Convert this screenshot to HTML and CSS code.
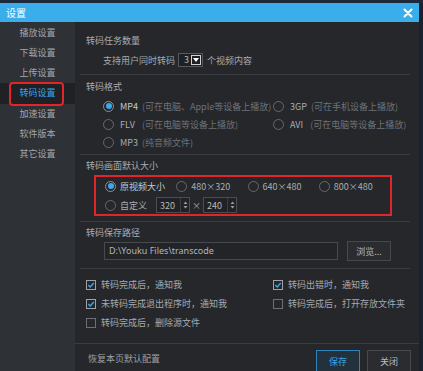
FILE: index.html
```html
<!DOCTYPE html>
<html lang="zh-CN">
<head>
<meta charset="utf-8">
<title>设置</title>
<link rel="stylesheet" href="styles.css">
</head>
<body>
<div class="desk"></div>
<div class="window">
  <div class="titlebar">
    <span class="title">设置</span>
    <svg class="close" width="10" height="10" viewBox="0 0 10 10"><path d="M1.5 1.5 L8.5 8.5 M8.5 1.5 L1.5 8.5" stroke="#fff" stroke-width="2" stroke-linecap="round"/></svg>
  </div>
  <div class="frame">
    <nav class="side">
      <div class="nav-item">播放设置</div>
      <div class="nav-item">下载设置</div>
      <div class="nav-item">上传设置</div>
      <div class="nav-item active">转码设置</div>
      <div class="nav-item">加速设置</div>
      <div class="nav-item">软件版本</div>
      <div class="nav-item">其它设置</div>
    </nav>
    <div class="main">
      <div class="content">
        <div class="heading h1">转码任务数量</div>
        <div class="count-row">
          <span>支持用户同时转码</span>
          <span class="select"><span class="sel-val">3</span><span class="sel-btn"><svg width="6" height="4" viewBox="0 0 6 4"><path d="M0 0 H6 L3 4 Z" fill="#fff"/></svg></span></span>
          <span class="after-sel">个视频内容</span>
        </div>
        <div class="sep s1"></div>
        <div class="heading h2">转码格式</div>
        <div class="formats">
          <div class="opt"><span class="radio on"></span><span class="lbl bright">MP4</span><span class="desc">(可在电脑、Apple等设备上播放)</span></div>
          <div class="opt"><span class="radio"></span><span class="lbl">3GP</span><span class="desc">(可在手机设备上播放)</span></div>
          <div class="opt"><span class="radio"></span><span class="lbl">FLV</span><span class="desc wide">(可在电脑等设备上播放)</span></div>
          <div class="opt"><span class="radio"></span><span class="lbl">AVI</span><span class="desc wide">(可在电脑等设备上播放)</span></div>
          <div class="opt"><span class="radio"></span><span class="lbl">MP3</span><span class="desc">(纯音频文件)</span></div>
        </div>
        <div class="sep s2"></div>
        <div class="heading h3">转码画面默认大小</div>
        <div class="sizebox">
          <div class="size-row">
            <div class="sopt"><span class="radio on"></span><span class="lbl bright">原视频大小</span></div>
            <div class="sopt"><span class="radio"></span><span class="lbl">480×320</span></div>
            <div class="sopt"><span class="radio"></span><span class="lbl">640×480</span></div>
            <div class="sopt"><span class="radio"></span><span class="lbl">800×480</span></div>
          </div>
          <div class="size-row custom">
            <div class="sopt-c"><span class="radio"></span><span class="lbl">自定义</span></div>
            <span class="spin"><span class="spin-val">320</span><span class="spin-arrows"><svg width="5" height="10" viewBox="0 0 5 10"><path d="M0.5 4 L2.5 1.5 L4.5 4 Z M0.5 6 L2.5 8.5 L4.5 6 Z" fill="#9a9da2"/></svg></span></span>
            <span class="times">×</span>
            <span class="spin"><span class="spin-val">240</span><span class="spin-arrows"><svg width="5" height="10" viewBox="0 0 5 10"><path d="M0.5 4 L2.5 1.5 L4.5 4 Z M0.5 6 L2.5 8.5 L4.5 6 Z" fill="#9a9da2"/></svg></span></span>
          </div>
        </div>
        <div class="sep s3"></div>
        <div class="heading h4">转码保存路径</div>
        <div class="path-row">
          <div class="path-input">D:\Youku Files\transcode</div>
          <div class="btn browse">浏览...</div>
        </div>
        <div class="sep s4"></div>
        <div class="checks">
          <div class="chk"><svg class="box" width="10" height="10" viewBox="0 0 10 10"><rect x="0.5" y="0.5" width="9" height="9" fill="none" stroke="#9ea2a8"/><path d="M2.3 5 L4.2 6.9 L7.8 3" fill="none" stroke="#3fa6e6" stroke-width="1.4"/></svg><span>转码完成后，通知我</span></div>
          <div class="chk"><svg class="box" width="10" height="10" viewBox="0 0 10 10"><rect x="0.5" y="0.5" width="9" height="9" fill="none" stroke="#9ea2a8"/><path d="M2.3 5 L4.2 6.9 L7.8 3" fill="none" stroke="#3fa6e6" stroke-width="1.4"/></svg><span>转码出错时，通知我</span></div>
          <div class="chk"><svg class="box" width="10" height="10" viewBox="0 0 10 10"><rect x="0.5" y="0.5" width="9" height="9" fill="none" stroke="#9ea2a8"/><path d="M2.3 5 L4.2 6.9 L7.8 3" fill="none" stroke="#3fa6e6" stroke-width="1.4"/></svg><span>未转码完成退出程序时，通知我</span></div>
          <div class="chk"><svg class="box" width="10" height="10" viewBox="0 0 10 10"><rect x="0.5" y="0.5" width="9" height="9" fill="none" stroke="#6c7076"/></svg><span>转码完成后，打开存放文件夹</span></div>
          <div class="chk"><svg class="box" width="10" height="10" viewBox="0 0 10 10"><rect x="0.5" y="0.5" width="9" height="9" fill="none" stroke="#6c7076"/></svg><span>转码完成后，删除源文件</span></div>
        </div>
      </div>
      <div class="footer">
        <span class="reset">恢复本页默认配置</span>
        <div class="btns">
          <div class="btn save">保存</div>
          <div class="btn closebtn">关闭</div>
        </div>
      </div>
    </div>
  </div>
</div>
</body>
</html>
```
FILE: styles.css
```css
* { box-sizing: border-box; margin: 0; padding: 0; }
html, body { width: 423px; height: 371px; overflow: hidden; }
body {
  background: #1a2230;
  font-family: "Noto Sans CJK SC", "Noto Sans", sans-serif;
  font-size: 9px;
  color: #a6a9ae;
}
.desk { height: 3px; background: #1d2a3c; }
.window { width: 419px; height: 368px; display: flex; flex-direction: column; }
.titlebar {
  height: 19px; background: #3aaeea; display: flex; align-items: center;
  justify-content: space-between; padding: 0 6px 0 6px;
}
.title { color: #fff; font-size: 10px; line-height: 19px; }
.close { display: block; margin-right: 0; }
.frame { flex: 1; display: flex; }
.side { width: 75px; background: #2e3136; padding-top: 0.5px; }
.nav-item { height: 20.3px; line-height: 20.3px; text-align: center; color: #a3a6ab; position: relative; }
.nav-item.active { color: #3aa4e6; background: #1f2125; }
.nav-item.active::after {
  content: ""; position: absolute; left: 9px; right: 11px; top: -1px; bottom: -2px;
  border: 2px solid #e1252a; border-radius: 4px;
}
.main { flex: 1; background: #25272b; display: flex; flex-direction: column; }
.content { height: 321px; padding-top: 12px; }
.heading { height: 14px; line-height: 14px; padding-left: 11px; color: #a9acb1; }
.h2 { margin-top: 5px; }
.h3 { margin-top: 4px; }
.h4 { margin-top: 4px; }
.sep { height: 1px; background: #393c41; margin-left: 5px; margin-right: 9px; }
.s1 { margin-top: 6px; }
.s2 { margin-top: 3px; }
.s3 { margin-top: 5px; }
.s4 { margin-top: 7px; }
.count-row { margin-top: 4px; height: 16px; display: flex; align-items: center; padding-left: 28px; }
.select {
  margin-left: 3px; width: 25px; height: 14px; border: 1px solid #55585d; background: #1e2024;
  display: flex; align-items: center; justify-content: space-between; padding: 0 1px 0 5px;
}
.sel-val { color: #b5b8bc; line-height: 12px; }
.sel-btn {
  width: 10px; height: 10px; border: 1px solid #d0d3d6; display: flex; align-items: center; justify-content: center;
}
.after-sel { margin-left: 4px; }
.formats { margin-top: 3px; padding-left: 28px; display: grid; grid-template-columns: 170px auto; grid-auto-rows: 18px; }
.opt { display: flex; align-items: center; }
.radio {
  width: 11px; height: 11px; border-radius: 50%; border: 1px solid #66696f; flex: none; position: relative;
}
.radio.on { border-color: #8d9096; }
.radio.on::after {
  content: ""; position: absolute; left: 1.5px; top: 1.5px; width: 6px; height: 6px; border-radius: 50%; background: #3aa8ee;
}
.opt .radio { margin-right: 6px; }
.lbl { color: #a9acb1; }
.lbl.bright { color: #c6c9cd; }
.desc { color: #6e7278; margin-left: 4px; }
.desc.wide { margin-left: 7px; }
.sizebox {
  margin-top: 2px; margin-left: 19px; width: 298px; height: 41px; border: 2px solid #e1252a; padding-left: 9px;
}
.size-row { height: 18px; display: flex; align-items: center; }
.size-row.custom { margin-top: 1px; }
.sopt { width: 73px; display: flex; align-items: center; }
.sopt .radio, .sopt-c .radio { margin-right: 4px; }
.sopt-c { display: flex; align-items: center; }
.spin {
  margin-left: 0; width: 34px; height: 16px; border: 1px solid #4a4d52; background: #202226;
  display: flex; align-items: center; justify-content: space-between;
}
.sopt-c + .spin { margin-left: 9px; }
.spin-val { padding-left: 3px; color: #b5b8bc; }
.spin-arrows { width: 9px; height: 14px; border-left: 1px solid #3a3d42; display: flex; align-items: center; justify-content: center; }
.times { width: 13px; text-align: center; color: #a9acb1; }
.path-row { margin-top: 1px; height: 20px; display: flex; align-items: center; padding-left: 29px; }
.path-input {
  width: 234px; height: 18px; border: 1px solid #46494e; background: #222428; line-height: 16px;
  padding-left: 4px; color: #b3b6ba; font-family: "Noto Sans", "Noto Sans CJK SC", sans-serif;
}
.btn {
  height: 20px; border: 1px solid #45484d; background: #2a2c30; display: flex; align-items: center; justify-content: center; color: #b5b8bc;
}
.browse { width: 44px; margin-left: 9px; }
.checks { margin-top: 6px; padding-left: 11px; display: grid; grid-template-columns: 187px auto; grid-auto-rows: 19px; }
.chk { display: flex; align-items: center; }
.chk .box { flex: none; margin-right: 5px; display: block; }
.footer {
  flex: 1; border-top: 1px solid #393c41; display: flex; justify-content: space-between; align-items: flex-start;
  padding: 6px 8px 0 13px;
}
.reset { margin-top: 2px; line-height: 14px; color: #9da0a5; }
.btns { display: flex; gap: 7px; }
.btns .btn { width: 44px; height: 22px; }
.save { border-color: #2c84bd; color: #3aa4e6; background: #23313d; }
.closebtn { color: #b8bbbf; }
```
